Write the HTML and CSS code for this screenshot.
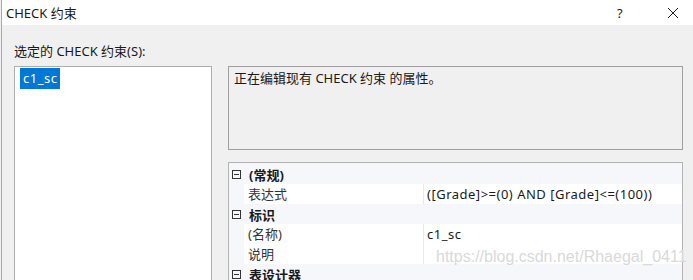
FILE: index.html
```html
<!DOCTYPE html>
<html lang="zh-Hans">
<head>
  <meta charset="UTF-8" />
  <title>CHECK 约束</title>
  <link rel="stylesheet" href="styles.css">
</head>
<body>
  <div class="window">
    <div class="titlebar">
      <span class="title">CHECK 约束</span>
      <span class="help">?</span>
      <span class="close">
        <svg width="12" height="12" viewBox="0 0 12 12"><path d="M1 1 L11 11 M11 1 L1 11" stroke="#222" stroke-width="1" fill="none"/></svg>
      </span>
    </div>

    <div class="content">
      <div class="label">选定的 CHECK 约束(S):</div>
      <div class="panes">
        <div class="list">
          <span class="item selected">c1_sc</span>
        </div>
        <div class="right">
          <div class="desc">正在编辑现有 CHECK 约束 的属性。</div>
          <div class="grid">
            <div class="cat"><span class="toggle"></span><b>(常规)</b></div>
            <div class="prop"><span class="name">表达式</span><span class="value">([Grade]&gt;=(0) AND [Grade]&lt;=(100))</span></div>
            <div class="cat"><span class="toggle"></span><b>标识</b></div>
            <div class="prop"><span class="name">(名称)</span><span class="value">c1_sc</span></div>
            <div class="prop"><span class="name">说明</span><span class="value"></span></div>
            <div class="cat"><span class="toggle"></span><b>表设计器</b></div>
          </div>
        </div>
      </div>
    </div>

    <div class="watermark">https://blog.csdn.net/Rhaegal_0411</div>
  </div>
</body>
</html>
```

FILE: styles.css
```css
* { box-sizing: border-box; margin: 0; padding: 0; }

body {
  width: 693px;
  height: 280px;
  overflow: hidden;
  background: #f0f0f0;
  font-family: "Noto Sans", "Noto Sans CJK SC", sans-serif;
  font-size: 13px;
  color: #1a1a1a;
}

.window {
  position: relative;
  height: 280px;
  overflow: hidden;
  margin-left: 1px;
  border-left: 1px solid #a8a8a8;
}

.titlebar {
  display: flex;
  align-items: center;
  height: 25px;
  background: #fff;
  padding-left: 4px;
}

.title { flex: 1; }

.help {
  width: 14px;
  margin-right: 36px;
}

.close {
  display: flex;
  margin-right: 14px;
}

.content {
  padding: 17px 0 0 12px;
}

.label {
  height: 24px;
  line-height: 18px;
}

.panes {
  display: flex;
  gap: 16px;
}

.list {
  width: 198px;
  height: 230px;
  background: #fff;
  border: 1px solid #adadad;
  padding: 1px 5px;
}

.item {
  display: inline-block;
  height: 21px;
  line-height: 21px;
  padding: 0 3px;
  letter-spacing: 0.5px;
}

.item.selected {
  background: #0078d7;
  color: #fff;
}

.right {
  width: 455px;
}

.desc {
  height: 84px;
  border: 1px solid #a0a0a0;
  padding: 2px 5px;
  line-height: 18px;
}

.grid {
  margin-top: 12px;
  background: #f5f7fb;
  border: 1px solid #b4b4b4;
  padding-top: 1px;
}

.cat {
  display: flex;
  align-items: center;
  height: 20px;
  padding-left: 3px;
}

.cat b { font-weight: bold; }

.toggle {
  position: relative;
  width: 9px;
  height: 9px;
  border: 1px solid #333;
  margin-right: 8px;
}

.toggle::after {
  content: "";
  position: absolute;
  left: 1px;
  top: 3px;
  width: 5px;
  height: 1px;
  background: #333;
}

.prop {
  display: flex;
  height: 20px;
  line-height: 20px;
  margin-left: 15px;
  background: #fff;
}

.name {
  width: 180px;
  padding-left: 4px;
  border-right: 1px solid #e4e8f0;
  color: #333;
}

.value {
  padding-left: 3px;
  letter-spacing: 0.5px;
}

.watermark {
  position: absolute;
  left: 434px;
  top: 248px;
  font-size: 16px;
  color: #d9d9d9;
  white-space: nowrap;
  font-family: "Liberation Sans", sans-serif;
}
```
